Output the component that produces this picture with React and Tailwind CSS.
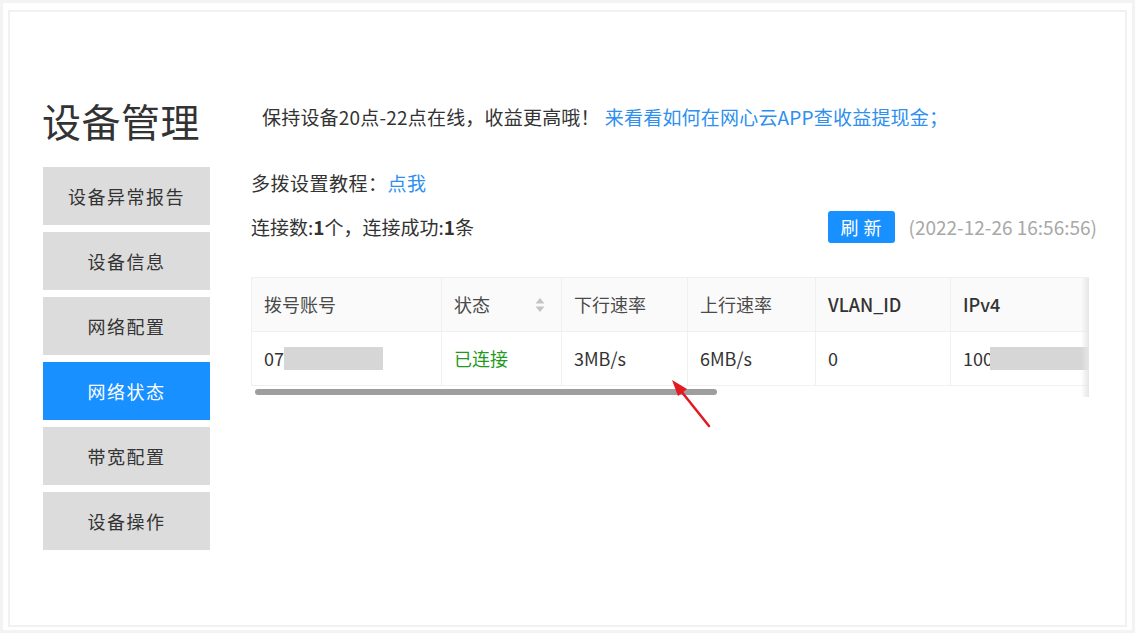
import React from "react";

const FONT = { fontFamily: '"Noto Sans CJK SC", "Noto Sans", sans-serif' };

const menu = ["设备异常报告", "设备信息", "网络配置", "网络状态", "带宽配置", "设备操作"];

function SortIcon() {
  return (
    <svg width="10" height="16" viewBox="0 0 10 16" className="ml-auto">
      <path d="M5 1 L9.5 6.5 L0.5 6.5 Z" fill="#c4c4c4" />
      <path d="M5 15 L9.5 9.5 L0.5 9.5 Z" fill="#c4c4c4" />
    </svg>
  );
}

export default function App() {
  return (
    <div
      className="relative w-[1135px] h-[633px] bg-white border-[3px] border-[#f3f3f3] px-[5px] pt-[7px] pb-[3px] overflow-hidden"
      style={FONT}
    >
      <div className="h-full border-2 border-[#f1f1f1] flex pl-[33px]">
        {/* sidebar */}
        <div className="w-[167px] shrink-0 flex flex-col pt-[86px]">
          <div className="text-[39px] leading-[44px] tracking-[0.5px] text-[#333] whitespace-nowrap -ml-[1px] mb-[25px]">设备管理</div>
          <div className="flex flex-col gap-[7px]">
            {menu.map((m) => (
              <div
                key={m}
                className={
                  "h-[58px] flex items-center justify-center text-[18px] tracking-[1.5px] " +
                  (m === "网络状态" ? "bg-[#1890ff] text-white" : "bg-[#dcdcdc] text-[#333]")
                }
              >
                {m}
              </div>
            ))}
          </div>
        </div>

        {/* content */}
        <div className="ml-[41px] w-[838px] flex flex-col pt-[91px] text-[#333]">
          <div className="text-[19px] leading-[28px] pl-[11px] tracking-[0.2px] whitespace-nowrap">
            保持设备20点-22点在线，收益更高哦！
            <span className="text-[#2e8ff0] ml-[5px]">来看看如何在网心云APP查收益提现金；</span>
          </div>
          <div className="mt-[38px] text-[19px] leading-[28px] tracking-[0.5px] whitespace-nowrap">
            多拨设置教程：<span className="text-[#2e8ff0]">点我</span>
          </div>
          <div className="mt-[11px] flex items-center h-[38px]">
            <div className="text-[19px] whitespace-nowrap">
              连接数:<span className="font-bold">1</span>个，连接成功:<span className="font-bold">1</span>条
            </div>
            <button className="ml-auto w-[67px] h-[32px] rounded-[3px] bg-[#1890ff] text-white text-[18px] flex items-center justify-center gap-[5px]">
              <span>刷</span>
              <span>新</span>
            </button>
            <div className="ml-[14px] mr-[-8px] text-[19px] text-[#a8a8a8] whitespace-nowrap">(2022-12-26 16:56:56)</div>
          </div>

          {/* table */}
          <div className="relative mt-[31px] w-[838px] overflow-hidden border-t border-[#f0f0f0]">
            <div className="flex w-[1000px]">
              {[
                ["拨号账号", 190],
                ["状态", 120],
                ["下行速率", 126],
                ["上行速率", 128],
                ["VLAN_ID", 135],
                ["IPv4", 301],
              ].map(([h, w]) => (
                <div
                  key={h}
                  style={{ width: w }}
                  className={
                    "h-[54px] bg-[#fafafa] border-b border-l border-[#f0f0f0] flex items-center pl-[12px] pr-[16px] text-[18px] " +
                    (h === "VLAN_ID" || h === "IPv4" ? "font-medium text-[#333]" : "text-[#4a4a4a]")
                  }
                >
                  {h}
                  {h === "状态" && <SortIcon />}
                </div>
              ))}
            </div>
            <div className="flex w-[1000px] text-[18px] text-[#333]">
              <div className="w-[190px] h-[54px] border-b border-l border-[#f0f0f0] flex items-center pl-[12px]">
                07<span className="inline-block w-[99px] h-[23px] bg-[#d6d6d6]"></span>
              </div>
              <div className="w-[120px] h-[54px] border-b border-l border-[#f0f0f0] flex items-center pl-[12px] text-[#1f9a1f]">
                已连接
              </div>
              <div className="w-[126px] h-[54px] border-b border-l border-[#f0f0f0] flex items-center pl-[12px]">3MB/s</div>
              <div className="w-[128px] h-[54px] border-b border-l border-[#f0f0f0] flex items-center pl-[12px]">6MB/s</div>
              <div className="w-[135px] h-[54px] border-b border-l border-[#f0f0f0] flex items-center pl-[12px]">0</div>
              <div className="w-[301px] h-[54px] border-b border-l border-[#f0f0f0] flex items-center pl-[12px]">
                100<span className="inline-block w-[99px] h-[23px] bg-[#d6d6d6] -ml-[3px]"></span>
              </div>
            </div>
            <div className="h-[11px] pt-[3px] pl-[4px]">
              <div className="w-[462px] h-[6px] rounded-full bg-[#9e9e9e]"></div>
            </div>
            <div className="absolute top-0 right-0 w-[8px] h-full bg-gradient-to-l from-[#e6e6e6] to-transparent"></div>
          </div>
        </div>
      </div>

      {/* red arrow annotation */}
      <svg className="absolute left-0 top-0 pointer-events-none" width="1135" height="633">
        <line x1="706" y1="423" x2="678" y2="388" stroke="#e3191f" strokeWidth="2.5" strokeLinecap="round" />
        <path d="M669 377 L684 386 L675 393 Z" fill="#e3191f" />
      </svg>
    </div>
  );
}
